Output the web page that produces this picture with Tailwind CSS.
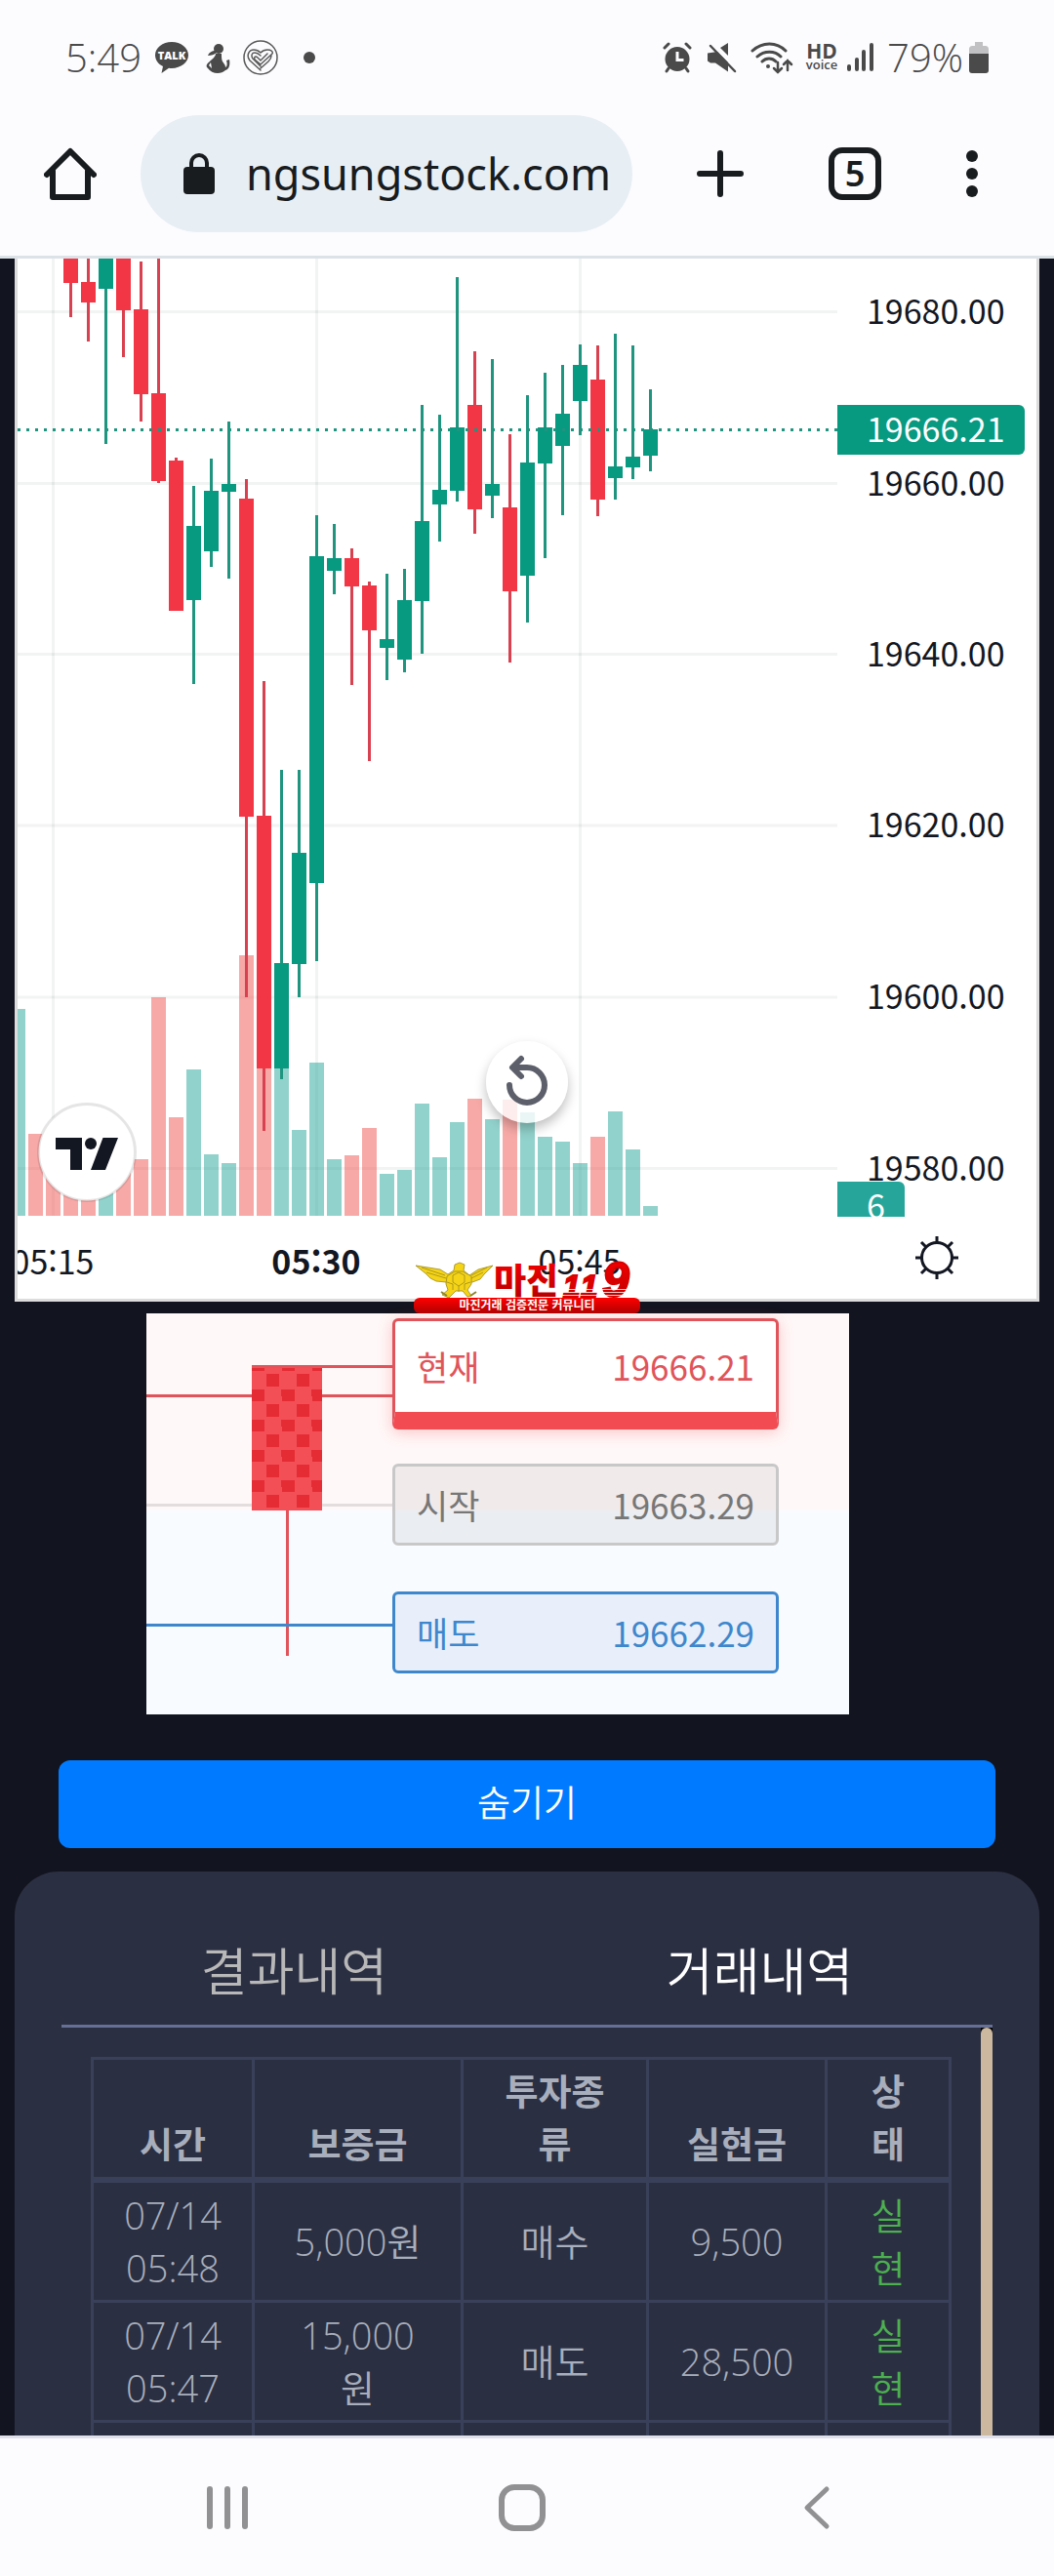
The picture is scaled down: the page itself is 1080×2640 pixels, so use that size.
<!DOCTYPE html>
<html lang="ko">
<head>
  <meta charset="UTF-8">
  <meta name="viewport" content="width=device-width, initial-scale=1.0">
  <title>ngsungstock.com</title>
  <script src="https://cdn.jsdelivr.net/npm/@tailwindcss/browser@4"></script>
</head>
<body class="flex h-screen flex-col overflow-hidden bg-[#12141f] font-['Noto_Sans_CJK_KR',sans-serif]">

  <!-- phone status bar + browser toolbar -->
  <header class="border-b-3 border-[#dce3e8] bg-[#fcfcff]">
    <div class="flex h-[118px] items-center pr-[67px] pl-[67px] font-['Open_Sans','Noto_Sans',sans-serif] text-[40px] font-[350] text-[#4a4a4a]">
      <span>5:49</span>
      <svg class="ml-[14px] h-9 w-[34px]" viewBox="0 0 34 36">
        <path fill="#4a4a4a" d="M17 2C7.600 2 0 8 0 15.500c0 5 3.200 9.200 8 11.600L6.500 34l7.500-5.300c1 .1 2 .2 3 .2 9.400 0 17-6 17-13.400S26.400 2 17 2z"/>
        <text x="17" y="20" text-anchor="middle" font-family="Open Sans" font-size="11" font-weight="800" fill="#fff">TALK</text>
      </svg>
      <svg class="ml-4 h-9 w-7" viewBox="0 0 28 36" fill="#4a4a4a">
        <circle cx="15" cy="9" r="5"/>
        <path d="M12 11c-4 0-7 2-8 5 3 0 7-1 9-3zM12 14h6c0 4 0 6 1 8s3 3 3 6c2-1 2-4 1-7l3-1c1 5 0 10-4 11-2 2-5 3-8 3-4 0-8-2-10-5-1-1-2-2-1-4 3-4 9-7 9-11zM7 23l-2 3 3 3z"/>
      </svg>
      <svg class="ml-3 h-9 w-9" viewBox="0 0 36 36" fill="none" stroke="#5a5a5a">
        <circle cx="18" cy="18" r="17" stroke-width="1.500"/>
        <path stroke-width="1.500" stroke-linecap="round" stroke-linejoin="round" d="M18 31L7 21c-4-5-1-11 4-11 3 0 5 1 7 3 2-2 4-3 7-3 4 0 6 2 5 4l-12 11-6-5c-1-3 1-4 3-2l3 3 7-7M18 27l-8-8c-2-3-1-6 2-6 2 0 4 1 6 3M29 16c0 3-1 4-3 6l-8 7"/>
      </svg>
      <span class="ml-[26px] h-3 w-3 rounded-full bg-[#4a4a4a]"></span>

      <svg class="ml-auto h-9 w-[30px]" viewBox="0 0 30 36" fill="none" stroke="#4a4a4a">
        <circle cx="15" cy="19.500" r="12.500" fill="#4a4a4a" stroke="none"/>
        <path stroke-width="3" stroke-linecap="round" d="M2 8l4-4M28 8l-4-4M6 29l-2 3M24 29l2 3"/>
        <path stroke="#fcfcff" stroke-width="3" d="M15 12v8.500h6.500"/>
      </svg>
      <svg class="ml-4 h-9 w-[30px]" viewBox="0 0 30 36" fill="#4a4a4a">
        <path d="M21 3v13l-8-8zM10 12L0 13.500v8l3 2h5l13 9V23z"/>
        <path stroke="#4a4a4a" stroke-width="2.500" stroke-linecap="round" d="M3 6l25 26"/>
      </svg>
      <svg class="ml-[14px] h-9 w-[44px]" viewBox="0 0 44 36" fill="none" stroke="#4a4a4a" stroke-width="3" stroke-linecap="round">
        <path d="M2 11c10-9.500 25-9.500 34 0M7 17c7-6.500 18-6.500 24 0M12 22c4-4 10-4 14 0"/>
        <circle cx="18" cy="27" r="2" fill="#4a4a4a" stroke="none"/>
        <path stroke-width="2.500" d="M28 23v10M24 29l4 4 4-4M38 31V21M34 25l4-4 4 4"/>
      </svg>
      <svg class="ml-3 h-9 w-[34px]" viewBox="0 0 34 36" fill="#4a4a4a">
        <text x="17" y="19" text-anchor="middle" font-family="Open Sans" font-size="21" font-weight="700">HD</text>
        <text x="17" y="30" text-anchor="middle" font-family="Open Sans" font-size="13" font-weight="600">voice</text>
      </svg>
      <svg class="ml-2 h-9 w-7" viewBox="0 0 28 36" stroke="#4a4a4a" stroke-width="4" stroke-linecap="round">
        <path d="M3 27v3M11 20v10M18 12v18M26 5v25"/>
      </svg>
      <span class="ml-[14px]">79%</span>
      <svg class="ml-[6px] h-9 w-5" viewBox="0 0 20 36">
        <path fill="#c1c1c3" d="M6 2h8v4h2c3 0 4 1 4 4v6H0v-6c0-3 1-4 4-4h2z"/>
        <path fill="#4a4a4a" d="M0 14h20v17c0 2-1 3-3 3H3c-2 0-3-1-3-3z"/>
      </svg>
    </div>

    <div class="flex items-center pr-[78px] pb-6 pl-[45px]">
      <button aria-label="Home">
        <svg class="h-[54px] w-[54px]" viewBox="0 0 54 54" fill="none" stroke="#181c1e" stroke-width="6" stroke-linecap="round" stroke-linejoin="round">
          <path d="M3 28L27 4l24 24M9 24v27h36V24"/>
        </svg>
      </button>
      <div class="mr-[66px] ml-[45px] flex h-[120px] min-w-0 flex-1 items-center rounded-full bg-[#e7eef4] pr-4 pl-11">
        <svg class="h-[42px] w-8 shrink-0" viewBox="0 0 32 42">
          <path fill="none" stroke="#181c1e" stroke-width="4" d="M8 16v-6a8 8 0 0 1 16 0v6"/>
          <rect y="14" width="32" height="28" rx="4" fill="#181c1e"/>
        </svg>
        <input aria-label="Address" class="ml-8 w-full min-w-0 bg-transparent font-['Noto_Sans',sans-serif] text-[45px] text-[#181c1e] outline-none" value="ngsungstock.com">
      </div>
      <button aria-label="New tab">
        <svg class="h-12 w-12" viewBox="0 0 48 48" stroke="#181c1e" stroke-width="6" stroke-linecap="round"><path d="M24 3v42M3 24h42"/></svg>
      </button>
      <button class="ml-[87px] flex h-[54px] w-[54px] items-center justify-center rounded-[14px] border-6 border-[#181c1e] font-['Noto_Sans',sans-serif] text-[36px] leading-none font-semibold text-[#181c1e]">5</button>
      <button class="ml-[87px]" aria-label="Menu">
        <svg class="h-12 w-3" viewBox="0 0 12 48" fill="#181c1e"><circle cx="6" cy="6" r="6"/><circle cx="6" cy="24" r="6"/><circle cx="6" cy="42" r="6"/></svg>
      </button>
    </div>
  </header>

  <main class="min-h-0 flex-1 overflow-hidden">
    <!-- chart -->
    <section class="relative mx-[15px] border-x-3 border-b-3 border-[#dcdcdc] bg-white">
      <svg id="chart" class="block w-full" viewBox="18 265 1044 1066" font-family="Noto Sans CJK KR" font-size="34" fill="#131722">
        <g id="grid" stroke="#2a2e39" stroke-opacity=".06" stroke-width="3"></g>
        <g id="volume" fill-opacity=".5"></g>
        <g id="candles"></g>
        <path d="M18 440.500H858" stroke="#1f947f" stroke-width="3" stroke-dasharray="3 6"/>
        <g id="prices"></g>
        <path fill="#089981" d="M858 415h186a6 6 0 0 1 6 6v39a6 6 0 0 1-6 6H858z"/>
        <text x="888" y="453" fill="#fff">19666.21</text>
        <clipPath id="pane"><path d="M858 1211h63a6 6 0 0 1 6 6v30h-69z"/></clipPath>
        <g clip-path="url(#pane)">
          <path fill="#26a69a" d="M858 1211h69v36h-69z"/>
          <text x="888" y="1249" fill="#fff">6</text>
        </g>
        <g text-anchor="middle">
          <text x="54" y="1306">05:15</text>
          <text x="324" y="1306" font-weight="700">05:30</text>
          <text x="594" y="1306">05:45</text>
        </g>
        <g fill="none" stroke="#131722" stroke-width="3">
          <circle cx="960" cy="1289" r="15.500"/>
          <path d="M960 1267v7M960 1304v7M938 1289h7M975 1289h7M944 1273l5 5M971 1300l5 5M976 1273l-5 5M949 1300l-5 5"/>
        </g>
        <circle cx="89" cy="1181" r="49.500" fill="#fff" stroke="#000" stroke-opacity=".1" stroke-width="3"/>
        <path d="M57 1166h27v33H72v-21H57zM105.500 1166H121l-13 33H93z"/>
        <circle cx="93" cy="1172" r="6"/>
      </svg>
      <button aria-label="Reset chart" class="absolute bottom-[180px] left-1/2 flex h-[84px] w-[84px] -translate-x-1/2 items-center justify-center rounded-full bg-white/80 shadow-[0_6px_12px_rgba(0,0,0,.25)]">
        <svg class="h-[84px] w-[84px]" viewBox="498 1067 84 84" fill="none" stroke="#5d606b" stroke-width="6" stroke-linecap="round" stroke-linejoin="round">
          <path d="M522 1112a18 18 0 1 0 18-18h-14M534 1085l-9 9 9 9"/>
        </svg>
      </button>
      <svg class="absolute -bottom-[15px] left-1/2 h-[54px] w-[232px] -translate-x-1/2" viewBox="424 1292 232 54">
        <defs>
          <linearGradient id="red" x1="0" y1="0" x2="0" y2="1"><stop offset="0" stop-color="#ff0000"/><stop offset="1" stop-color="#b00000"/></linearGradient>
        </defs>
        <g stroke="#9a8a1e" stroke-width=".8" fill="#f5d417">
          <path d="M426 1297l25 4 8 5 6-4 1-6 5-2 5 2-1 6 6 5 9-6 15-4-9 9-4 5-8 3-9 1-2 4h-14l-2-5-10-1-6-3-5-5z"/>
          <path d="M458 1308l8-5h8l9 5v8l-4 6 4 6-4 1-5-6h-7l-7 7-7-3 6-5-2-6z"/>
          <path fill="none" d="M432 1299l24 8M437 1304l20 6M499 1299l-16 8M495 1304l-12 6M464 1307l6-3 6 3v7l-6 4-6-4zM458 1314l6 2v6M482 1314l-6 2v6M470 1318v6"/>
        </g>
        <path fill="none" stroke="#8f8430" stroke-width="2" d="M452 1324l6 4M488 1324l-6 4"/>
        <g fill="url(#red)" font-weight="900">
          <text x="506" y="1326" font-size="36">마진</text>
          <g font-family="Liberation Sans" font-style="italic" font-weight="700" stroke="#d80000" stroke-width="2">
            <text x="577" y="1329" font-size="31">1</text>
            <text x="595" y="1329" font-size="31">1</text>
            <text x="617" y="1329" font-size="50">9</text>
          </g>
        </g>
        <path stroke="#fff" stroke-opacity=".8" d="M576 1321.500h66M576 1324.500h66M576 1327.500h66"/>
        <rect x="424" y="1330" width="232" height="16" rx="6" fill="url(#red)"/>
        <text x="540" y="1342" text-anchor="middle" font-size="12" font-weight="700" fill="#fff">마진거래 검증전문 커뮤니티</text>
      </svg>
    </section>

    <!-- live price -->
    <section class="relative mt-3 ml-[150px] w-2/3 bg-[#f8fbff] pt-[5px] pb-[42px] text-[35px]">
      <svg class="absolute inset-0 h-full w-full" viewBox="0 0 720 411" preserveAspectRatio="none">
        <defs>
          <pattern id="check" x="108" y="54" width="31" height="31" patternUnits="userSpaceOnUse">
            <rect width="31" height="31" fill="#f34f56"/>
            <path fill="#e52c34" d="M15 8h13v13H15zM0 24h13v7H0zM31 24h-1v7h1zM0 0h13v5H0z"/>
          </pattern>
        </defs>
        <path fill="#fff8f8" d="M0 0h720v202H0z"/>
        <path stroke="#e0545b" stroke-width="3" d="M108 54.500h144M0 84.500h252M144.500 202v149"/>
        <path stroke="#e3dedd" stroke-width="3" d="M0 196.500h252"/>
        <path fill="url(#check)" d="M108 56h72v146h-72z"/>
        <path stroke="#3f87cc" stroke-width="3" d="M0 319.500h252"/>
      </svg>
      <div class="relative ml-[35%] flex h-[114px] w-[55%] items-center justify-between rounded-md border-3 border-b-18 border-[#e0545b] border-b-[#f24b52] bg-white px-[22px] text-[#e0545b] shadow-[0_3px_15px_rgba(242,75,82,.3)]">
        <span>현재</span><span>19666.21</span>
      </div>
      <div class="relative mt-[35px] ml-[35%] flex h-[84px] w-[55%] items-center justify-between rounded-md border-3 border-[#c8c8c8] bg-[#777]/10 px-[22px] text-[#777]">
        <span>시작</span><span>19663.29</span>
      </div>
      <div class="relative mt-[47px] ml-[35%] flex h-[84px] w-[55%] items-center justify-between rounded-md border-3 border-[#3f87cc] bg-[#e8effb] px-[22px] text-[#3f87cc]">
        <span>매도</span><span>19662.29</span>
      </div>
    </section>

    <div class="mt-[47px] px-[60px]">
      <button class="h-[90px] w-full rounded-xl bg-[#007bff] pb-1 text-[37px] font-[350] text-white">숨기기</button>
    </div>

    <!-- history -->
    <section class="mx-[15px] mt-6 rounded-t-[45px] bg-[#2b2f42] px-12 pt-[51px]">
      <div class="grid grid-cols-2 border-b-3 border-[#666f96] text-[52px] font-[350]">
        <button class="h-[106px] pb-2 text-[#b8b8b8]">결과내역</button>
        <button class="h-[106px] pb-2 text-white">거래내역</button>
      </div>
      <div class="flex h-[600px]">
        <div class="flex-1 px-[30px] pt-[30px]">
          <table class="w-full table-fixed border-collapse text-center font-['Open_Sans','Noto_Sans_CJK_KR',sans-serif] text-[38px] leading-[54px] font-[350] text-[#a8aebb]">
            <colgroup>
              <col class="w-[165px]"><col class="w-[214px]"><col class="w-[190px]"><col class="w-[183px]"><col>
            </colgroup>
            <thead class="align-bottom text-[37px]">
              <tr>
                <th class="border-3 border-b-6 border-[#39415a] py-[6px] font-bold">시간</th>
                <th class="border-3 border-b-6 border-[#39415a] py-[6px] font-bold">보증금</th>
                <th class="border-3 border-b-6 border-[#39415a] py-[6px] font-bold">투자종<br>류</th>
                <th class="border-3 border-b-6 border-[#39415a] py-[6px] font-bold">실현금</th>
                <th class="border-3 border-b-6 border-[#39415a] py-[6px] font-bold">상<br>태</th>
              </tr>
            </thead>
            <tbody>
              <tr>
                <td class="border-3 border-[#39415a] py-[6px]">07/14<br>05:48</td>
                <td class="border-3 border-[#39415a] py-[6px]">5,000원</td>
                <td class="border-3 border-[#39415a] py-[6px]">매수</td>
                <td class="border-3 border-[#39415a] py-[6px]">9,500</td>
                <td class="border-3 border-[#39415a] py-[6px] text-[#4caf50]">실<br>현</td>
              </tr>
              <tr>
                <td class="border-3 border-[#39415a] py-[6px]">07/14<br>05:47</td>
                <td class="border-3 border-[#39415a] py-[6px]">15,000<br>원</td>
                <td class="border-3 border-[#39415a] py-[6px]">매도</td>
                <td class="border-3 border-[#39415a] py-[6px]">28,500</td>
                <td class="border-3 border-[#39415a] py-[6px] text-[#4caf50]">실<br>현</td>
              </tr>
              <tr class="h-[123px]">
                <td class="border-3 border-[#39415a]"></td>
                <td class="border-3 border-[#39415a]"></td>
                <td class="border-3 border-[#39415a]"></td>
                <td class="border-3 border-[#39415a]"></td>
                <td class="border-3 border-[#39415a]"></td>
              </tr>
            </tbody>
          </table>
        </div>
        <div class="w-3 bg-black"><div class="h-full rounded-full bg-[#cbb89f]"></div></div>
      </div>
    </section>
  </main>

  <!-- system navigation -->
  <nav class="grid h-36 shrink-0 grid-cols-3 place-items-center border-t-3 border-[#dfe0ea] bg-[#fcfcff] pr-[92px] pl-[82px]">
    <button aria-label="Recents">
      <svg class="h-12 w-12" viewBox="0 0 48 48" stroke="#919194" stroke-width="6" stroke-linecap="round"><path d="M6 5v38M24 5v38M42 5v38"/></svg>
    </button>
    <button aria-label="Home screen">
      <svg class="h-12 w-12" viewBox="0 0 48 48" fill="none" stroke="#919194" stroke-width="6"><rect x="3" y="3" width="42" height="42" rx="13"/></svg>
    </button>
    <button aria-label="Back">
      <svg class="h-12 w-12" viewBox="0 0 48 48" fill="none" stroke="#919194" stroke-width="5" stroke-linecap="round" stroke-linejoin="round"><path d="M34 5L14 24l20 19"/></svg>
    </button>
  </nav>

  <script>
    const NS = 'http://www.w3.org/2000/svg';
    function add(id, tag, attrs, text) {
      const el = document.createElementNS(NS, tag);
      for (const k in attrs) el.setAttribute(k, attrs[k]);
      if (text) el.textContent = text;
      document.getElementById(id).appendChild(el);
    }

    // horizontal and vertical grid, price labels
    [[19680, 319.5], [19660, 495.5], [19640, 670.5], [19620, 846], [19600, 1022], [19580, 1197.5]].forEach(([p, y]) => {
      add('grid', 'path', { d: `M18 ${y}H858` });
      add('prices', 'text', { x: 888, y: y + 12 }, p.toFixed(2));
    });
    [54.5, 324.5, 594.5].forEach(x => add('grid', 'path', { d: `M${x} 265V1246` }));

    // direction, high, body top, body bottom, low
    const candles = [
      ['r', 265, 265, 290, 325], ['r', 265, 289, 310, 350], ['g', 265, 265, 296, 455], ['r', 265, 265, 318, 366],
      ['r', 268, 317, 404, 432], ['r', 265, 403, 493, 495], ['r', 469, 472, 626, 626], ['g', 498, 539, 615, 701],
      ['g', 470, 503, 565, 581], ['g', 432, 496, 504, 593], ['r', 491, 511, 837, 1022], ['r', 698, 836, 1095, 1159],
      ['g', 789, 987, 1095, 1106], ['g', 789, 874, 988, 1022], ['g', 528, 570, 905, 985], ['g', 537, 572, 585, 609],
      ['r', 562, 572, 601, 702], ['r', 596, 600, 646, 780], ['g', 588, 655, 664, 697], ['g', 583, 615, 676, 689],
      ['g', 415, 534, 616, 670], ['g', 425, 502, 517, 555], ['g', 284, 438, 503, 514], ['r', 360, 415, 522, 547],
      ['g', 368, 496, 508, 531], ['r', 445, 520, 606, 679], ['g', 405, 474, 590, 638], ['g', 382, 438, 475, 572],
      ['g', 374, 424, 457, 528], ['g', 353, 374, 411, 446], ['r', 354, 389, 512, 529], ['g', 342, 478, 490, 512],
      ['g', 354, 468, 479, 491], ['g', 399, 440, 467, 483]
    ];
    candles.forEach(([c, high, top, bottom, low], i) => {
      const x = 65 + i * 18;
      add('candles', 'rect', { x: x + 6, y: high, width: 3, height: low - high, fill: c === 'g' ? '#1f947f' : '#d8414f' });
      add('candles', 'rect', { x, y: top, width: 15, height: bottom - top, fill: c === 'g' ? '#089981' : '#f23645' });
    });

    // volume starts three bars before the first candle
    const volume = [
      ['g', 1034], ['r', 1162], ['r', 1188], ['r', 1190], ['r', 1190], ['g', 1190], ['r', 1190], ['r', 1188], ['r', 1022],
      ['r', 1145], ['g', 1096], ['g', 1183], ['g', 1192], ['r', 979], ['r', 1060], ['g', 1060], ['g', 1158], ['g', 1089],
      ['g', 1188], ['r', 1184], ['r', 1156], ['g', 1203], ['g', 1199], ['g', 1131], ['g', 1186], ['g', 1150], ['r', 1126],
      ['g', 1147], ['r', 1127], ['g', 1140], ['g', 1165], ['g', 1170], ['g', 1192], ['r', 1165], ['g', 1139], ['g', 1178], ['g', 1236]
    ];
    volume.forEach(([c, top], i) => {
      add('volume', 'rect', { x: 11 + i * 18, y: top, width: 15, height: 1246 - top, fill: c === 'g' ? '#26a69a' : '#ef5350' });
    });
  </script>
</body>
</html>
